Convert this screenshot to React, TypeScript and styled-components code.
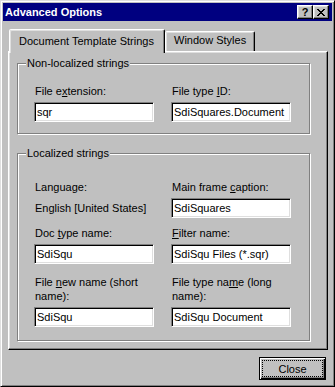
import styled, { createGlobalStyle } from "styled-components";

const face = "#c0c0c0";

const GlobalStyle = createGlobalStyle`
  * { box-sizing: border-box; }
  body {
    margin: 0;
    background: ${face};
    font-family: "Liberation Sans", Arial, sans-serif;
    font-size: 11px;
    color: #000;
  }
`;

const Window = styled.div`
  width: 335px;
  height: 387px;
  background: ${face};
  border: 1px solid;
  border-color: #dfdfdf #000 #000 #dfdfdf;
  box-shadow: inset 1px 1px #fff, inset -1px -1px #808080;
  padding: 2px;
  display: flex;
  flex-direction: column;
`;

const TitleBar = styled.div`
  height: 18px;
  flex: none;
  background: #000080;
  color: #fff;
  display: flex;
  align-items: center;
  justify-content: space-between;
  padding: 0 3px 0 2px;
  font-weight: bold;
  font-size: 11px;
`;

const CaptionButtons = styled.div`
  display: flex;
`;

const CaptionButton = styled.button`
  width: 16px;
  height: 14px;
  padding: 0;
  background: ${face};
  border: 1px solid;
  border-color: #fff #000 #000 #fff;
  box-shadow: inset -1px -1px #808080, inset 1px 1px #dfdfdf;
  display: flex;
  align-items: center;
  justify-content: center;
  font: bold 11px "Liberation Sans", Arial, sans-serif;
  color: #000;
`;

const Body = styled.div`
  flex: 1;
  display: flex;
  flex-direction: column;
  padding: 8px 0 0 5px;
`;

const TabStrip = styled.div`
  display: flex;
  align-items: flex-end;
  height: 22px;
  padding-left: 1px;
`;

const Tab = styled.div<{ $active?: boolean; $w: number }>`
  position: relative;
  z-index: ${(p) => (p.$active ? 1 : 0)};
  width: ${(p) => p.$w}px;
  height: ${(p) => (p.$active ? 24 : 20)}px;
  margin-bottom: ${(p) => (p.$active ? -2 : 0)}px;
  background: ${face};
  border: 1px solid;
  border-bottom: none;
  border-color: #fff #000 transparent #fff;
  border-radius: 2px 2px 0 0;
  box-shadow: inset -1px 0 #808080, inset 1px 1px #dfdfdf;
  padding: ${(p) => (p.$active ? "5px 0 0 9px" : "2px 0 0 8px")};
  white-space: nowrap;
  line-height: 13px;
`;

const Panel = styled.div`
  width: 320px;
  height: 299px;
  border: 1px solid;
  border-color: #fff #000 #000 #fff;
  box-shadow: inset -1px -1px #808080, inset 1px 1px #dfdfdf;
  padding: 5px 0 0 8px;
  display: flex;
  flex-direction: column;
  gap: 13px;
`;

const GroupBox = styled.fieldset`
  width: 293px;
  margin: 0;
  padding: 0;
  min-width: 0;
  border: 1px solid #808080;
  box-shadow: 1px 1px 0 #fff, inset 1px 1px 0 #fff;
`;

const Legend = styled.legend`
  margin-left: 8px;
  padding: 0 1px;
  line-height: 13px;
  background: ${face};
`;

const FieldGrid = styled.div<{ $pad: string }>`
  display: grid;
  grid-template-columns: 120px 120px;
  column-gap: 17px;
  padding: ${(p) => p.$pad};
`;

const Field = styled.div<{ $gap?: number }>`
  display: flex;
  flex-direction: column;
  margin-top: ${(p) => p.$gap ?? 0}px;
`;

const Label = styled.label`
  line-height: 14px;
  margin-bottom: 4px;
  padding-left: 1px;
`;

const Key = styled.u`
  text-decoration-thickness: 1px;
  text-underline-offset: 1px;
`;

const TextBox = styled.input`
  width: 120px;
  height: 20px;
  border: 1px solid;
  border-color: #808080 #fff #fff #808080;
  box-shadow: inset 1px 1px #000, inset -1px -1px #dfdfdf;
  padding: 0 0 0 2px;
  background: #fff;
  font: 11px "Liberation Sans", Arial, sans-serif;
  color: #000;
  outline: none;
`;

const StaticText = styled.div`
  height: 20px;
  line-height: 20px;
  padding-left: 1px;
`;

const Footer = styled.div`
  display: flex;
  justify-content: flex-end;
  padding: 7px 6px 0 0;
`;

const DefaultButton = styled.button`
  width: 67px;
  height: 23px;
  padding: 2px;
  display: flex;
  background: ${face};
  border: 1px solid #000;
  box-shadow: inset 1px 1px #fff, inset -1px -1px #000, inset -2px -2px #808080;
  font: 11px "Liberation Sans", Arial, sans-serif;
  color: #000;
`;

const FocusRect = styled.span`
  flex: 1;
  border: 1px dotted #000;
  display: flex;
  align-items: center;
  justify-content: center;
`;

const closeGlyph = [
  "11000011",
  "01100110",
  "00111100",
  "00011000",
  "00111100",
  "01100110",
  "11000011",
];

const CloseIcon = () => (
  <svg width="8" height="7" viewBox="0 0 8 7" shapeRendering="crispEdges">
    {closeGlyph.flatMap((row, y) =>
      row.split("").map((c, x) =>
        c === "1" ? <rect key={`${x}-${y}`} x={x} y={y} width="1" height="1" fill="#000" /> : null
      )
    )}
  </svg>
);

export default function App() {
  return (
    <>
      <GlobalStyle />
      <Window>
        <TitleBar>
          <span>Advanced Options</span>
          <CaptionButtons>
            <CaptionButton>?</CaptionButton>
            <CaptionButton>
              <CloseIcon />
            </CaptionButton>
          </CaptionButtons>
        </TitleBar>
        <Body>
          <TabStrip>
            <Tab $active $w={156}>Document Template Strings</Tab>
            <Tab $w={90}>Window Styles</Tab>
          </TabStrip>
          <Panel>
            <GroupBox>
              <Legend>Non-localized strings</Legend>
              <FieldGrid $pad="14px 0 11px 16px">
                <Field>
                  <Label>
                    File e<Key>x</Key>tension:
                  </Label>
                  <TextBox readOnly defaultValue="sqr" />
                </Field>
                <Field>
                  <Label>
                    File type <Key>I</Key>D:
                  </Label>
                  <TextBox readOnly defaultValue="SdiSquares.Document" />
                </Field>
              </FieldGrid>
            </GroupBox>
            <GroupBox>
              <Legend>Localized strings</Legend>
              <FieldGrid $pad="20px 0 13px 16px">
                <Field>
                  <Label>Language:</Label>
                  <StaticText>English [United States]</StaticText>
                </Field>
                <Field>
                  <Label>
                    Main frame <Key>c</Key>aption:
                  </Label>
                  <TextBox readOnly defaultValue="SdiSquares" />
                </Field>
                <Field $gap={8}>
                  <Label>
                    Doc <Key>t</Key>ype name:
                  </Label>
                  <TextBox readOnly defaultValue="SdiSqu" />
                </Field>
                <Field $gap={8}>
                  <Label>
                    <Key>F</Key>ilter name:
                  </Label>
                  <TextBox readOnly defaultValue="SdiSqu Files (*.sqr)" />
                </Field>
                <Field $gap={11}>
                  <Label>
                    File <Key>n</Key>ew name (short
                    <br />
                    name):
                  </Label>
                  <TextBox readOnly defaultValue="SdiSqu" />
                </Field>
                <Field $gap={11}>
                  <Label>
                    File type na<Key>m</Key>e (long
                    <br />
                    name):
                  </Label>
                  <TextBox readOnly defaultValue="SdiSqu Document" />
                </Field>
              </FieldGrid>
            </GroupBox>
          </Panel>
          <Footer>
            <DefaultButton>
              <FocusRect>Close</FocusRect>
            </DefaultButton>
          </Footer>
        </Body>
      </Window>
    </>
  );
}
